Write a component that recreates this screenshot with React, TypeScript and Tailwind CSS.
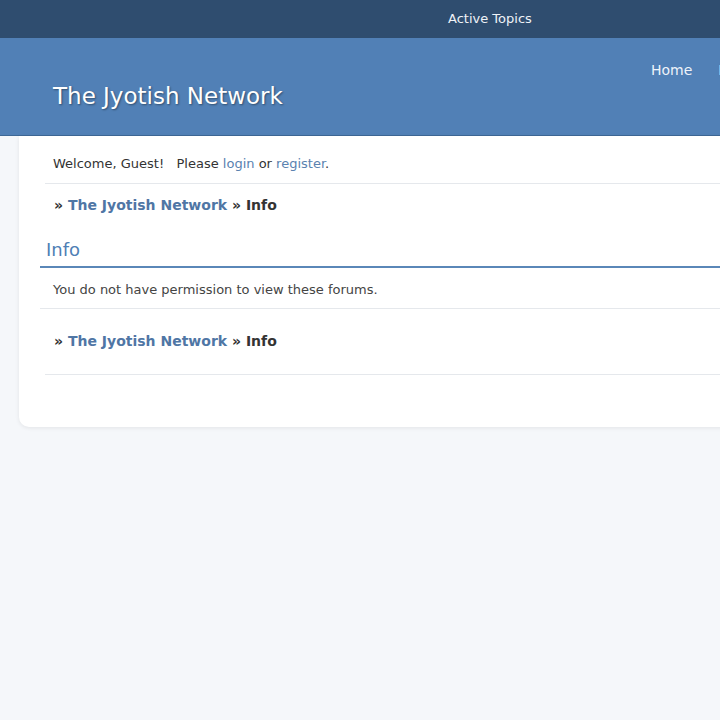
import React from 'react';

const Breadcrumb: React.FC = () => (
  <div className="px-[9px] text-[14px] font-bold text-[#333]">
    <span>» </span>
    <a className="text-[#4f76a5]">The Jyotish Network</a>
    <span> » Info</span>
  </div>
);

const App: React.FC = () => {
  return (
    <div className="w-[720px] h-[720px] overflow-hidden bg-[#f5f7fa] font-['DejaVu_Sans',sans-serif]">
      <div className="w-[900px]">
        <div className="h-[38px] bg-[#2f4d6f] flex items-center pl-[448px]">
          <span className="text-[13px] text-[#eef2f7]">Active Topics</span>
        </div>
        <div className="h-[98px] bg-[#5180b6] border-b border-[#3e6896] flex justify-between">
          <div className="pl-[53px] pt-[41px] text-[23px] text-white [text-shadow:1px_1px_2px_rgba(0,0,0,0.4)]">
            The Jyotish Network
          </div>
          <div className="flex gap-[26px] pt-[22px] text-[14px] text-[#eef3fa] w-[249px]">
            <span>Home</span>
            <span>Forum</span>
          </div>
        </div>
        <div className="ml-[19px] bg-white rounded-bl-[10px] shadow-[0_1px_4px_rgba(0,0,0,0.08)] pl-[21px] pb-[52px]">
          <div className="ml-[5px] h-[48px] border-b border-[#e5e8ec] flex items-center pl-[8px] pt-[9px] text-[13px] text-[#333]">
            <span>Welcome, Guest!&nbsp;&nbsp;&nbsp;Please <a className="text-[#5a82b0]">login</a> or <a className="text-[#5a82b0]">register</a>.</span>
          </div>
          <div className="ml-[5px] pt-[11px]">
            <Breadcrumb />
          </div>
          <div className="mt-[23px] border-b-2 border-[#5a87b8] pl-[6px] pb-[5px] text-[18px] leading-[22px] text-[#4f7fb5]">
            Info
          </div>
          <div className="h-[41px] border-b border-[#e5e8ec] flex items-center pl-[13px] pt-[4px] text-[13px] text-[#444]">
            You do not have permission to view these forums.
          </div>
          <div className="ml-[5px] h-[66px] border-b border-[#e5e8ec] flex items-center">
            <Breadcrumb />
          </div>
        </div>
      </div>
    </div>
  );
};

export default App;
